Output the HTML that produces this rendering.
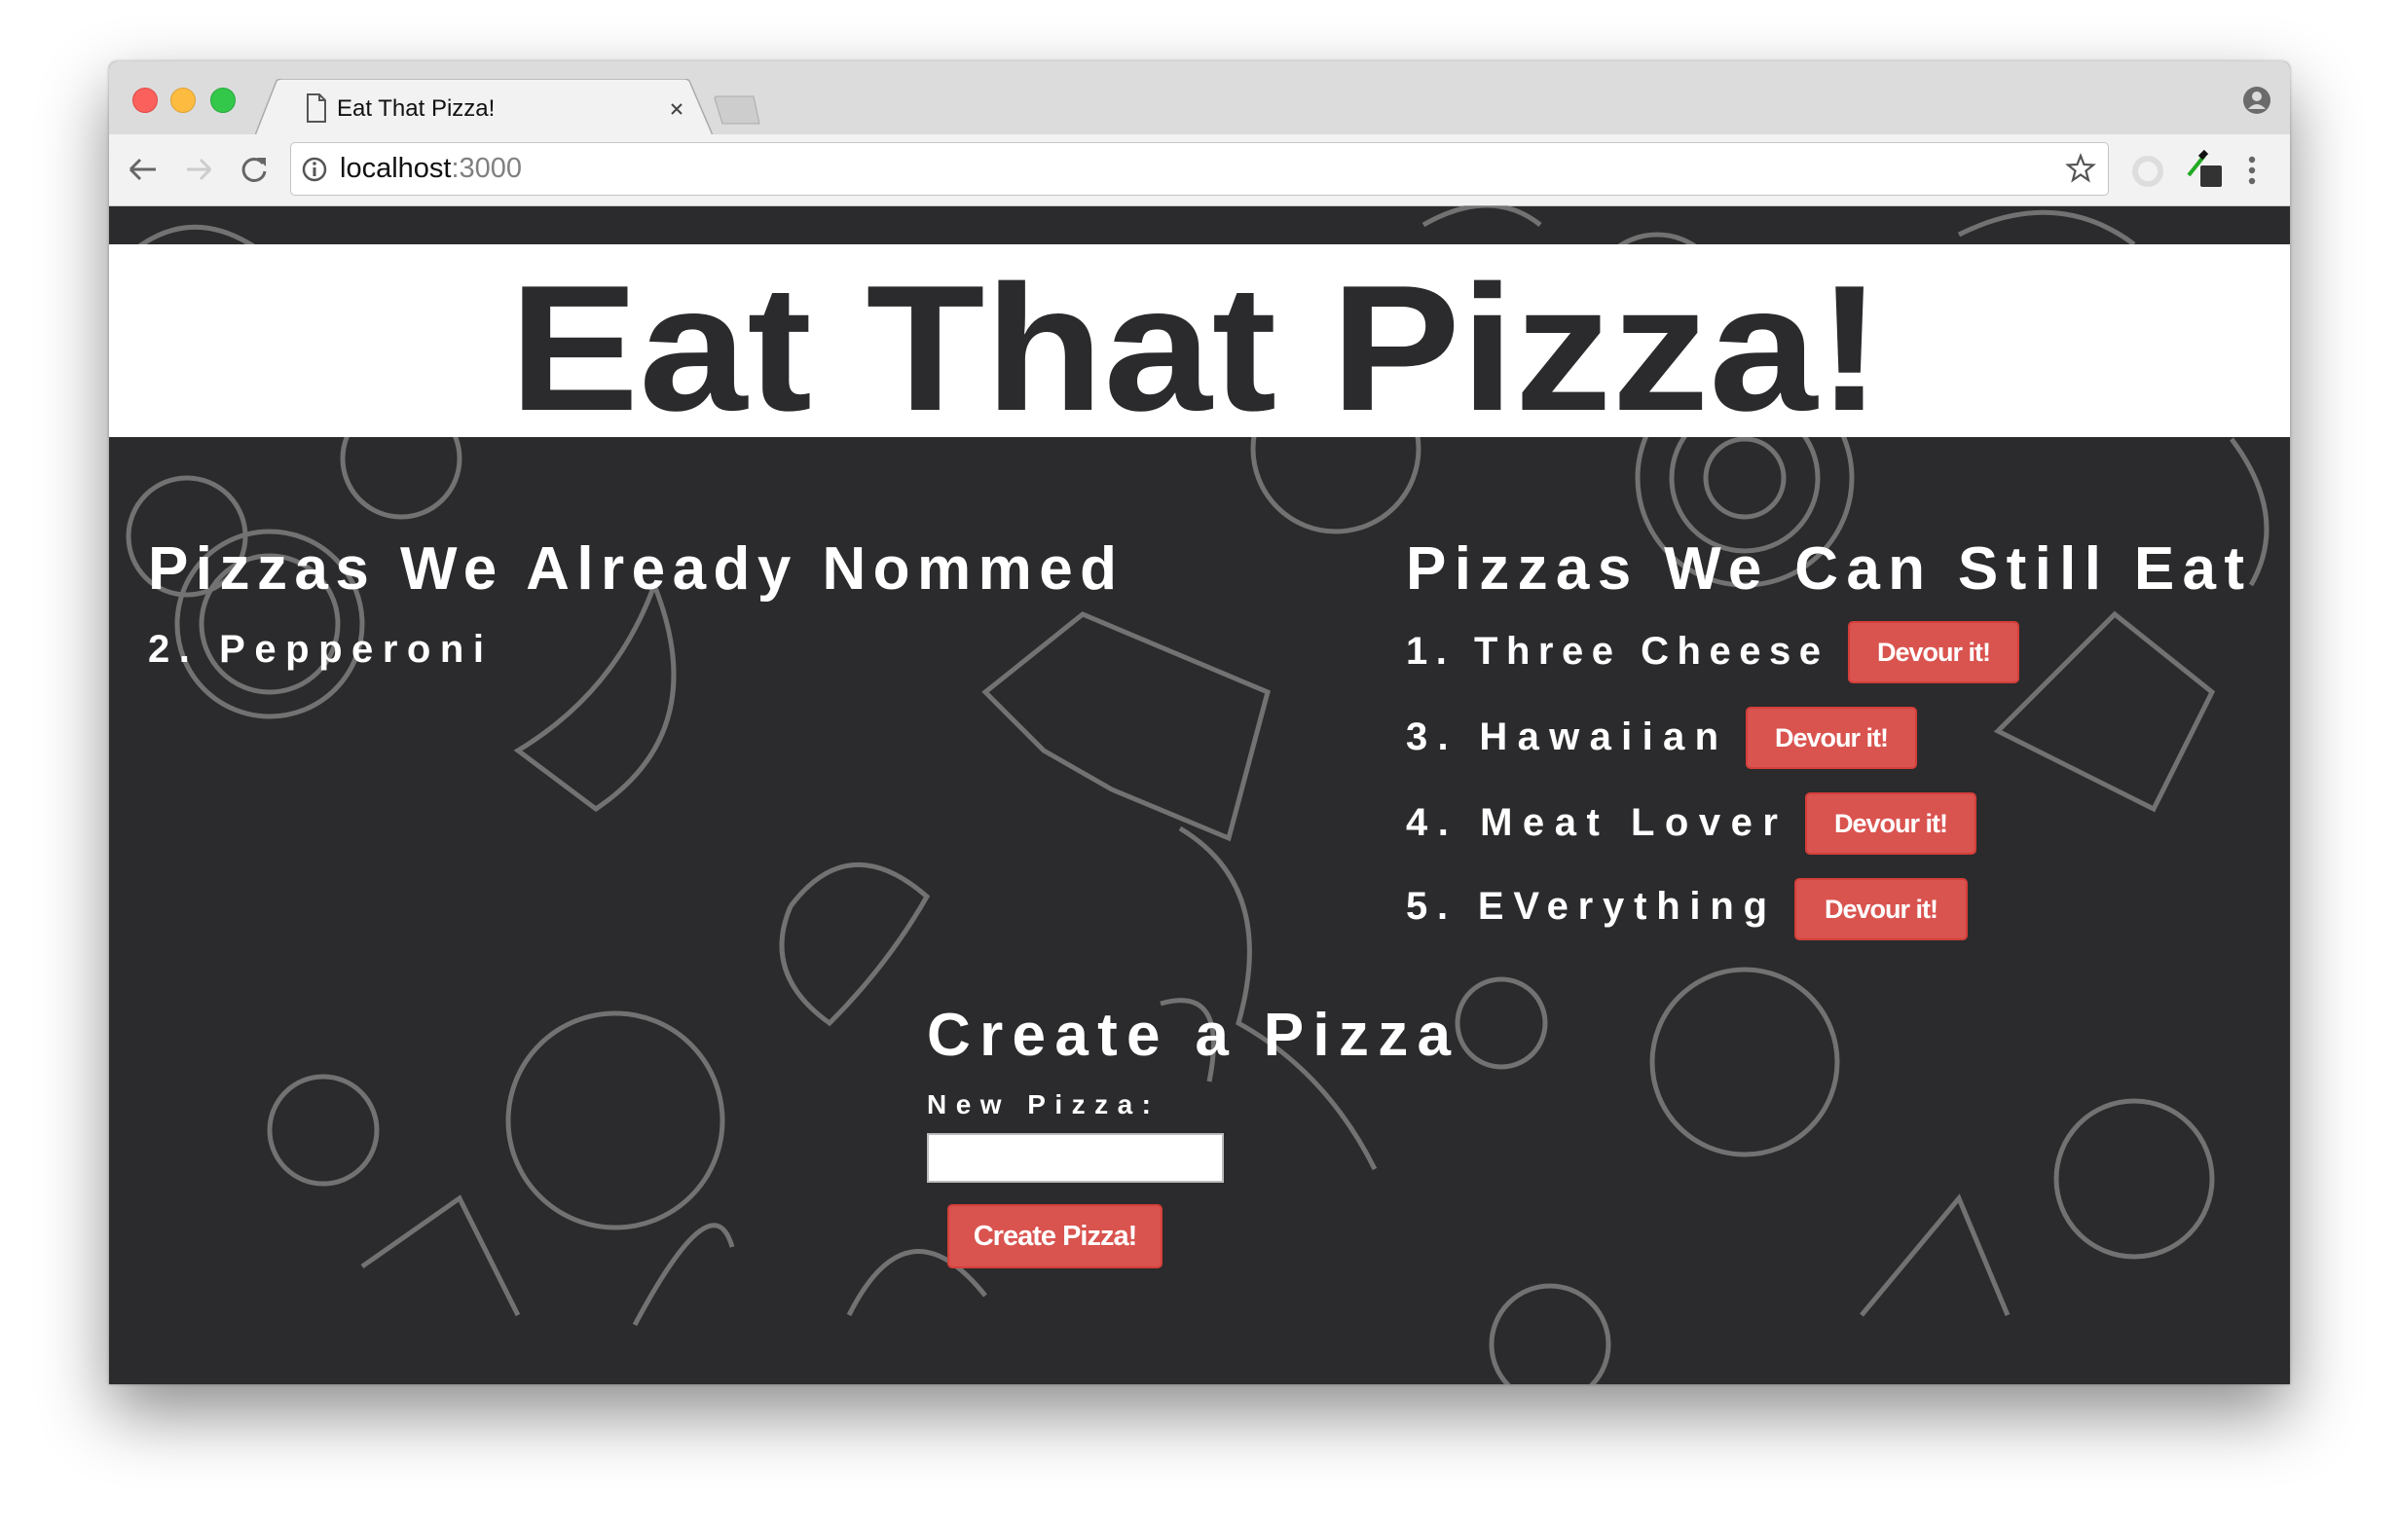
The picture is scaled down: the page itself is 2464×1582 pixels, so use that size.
<!DOCTYPE html>
<html><head><meta charset="utf-8"><style>
html,body{margin:0;padding:0;background:#fff;width:2464px;height:1582px;overflow:hidden;font-family:"Liberation Sans",sans-serif}
.win{position:absolute;left:112px;top:63px;width:2240px;height:1359px;box-shadow:0 30px 70px rgba(0,0,0,.45),0 0 3px rgba(0,0,0,.3);border-radius:8px 8px 0 0;overflow:hidden;background:#2b2a2c}
.tabbar{position:absolute;left:0;top:0;width:100%;height:75px;background:#dcdcdc;border-bottom:1px solid #b5b5b5}
.toolbar{position:absolute;left:0;top:75px;width:100%;height:73px;background:#f2f2f2;border-bottom:1px solid #c8c8c8}
.dot{position:absolute;top:27px;width:24px;height:24px;border-radius:50%}
.url{position:absolute;left:186px;top:8px;width:1866px;height:53px;background:#fff;border:1px solid #c4c4c4;border-radius:5px}
.content{position:absolute;left:0;top:148px;width:2240px;height:1211px}
.hdr{position:absolute;left:0;top:40px;width:2240px;height:198px;background:#fff}
.btn{position:absolute;background:#d9534f;border:2px solid #d43f3a;border-radius:5px;color:#fff;font-weight:bold;font-size:27px;letter-spacing:-1px;text-align:center;box-sizing:border-box}
</style></head><body>
<div class="win">
 <div class="tabbar">
  <div class="dot" style="left:24px;background:#fc605c;border:1px solid #de4a45"></div>
  <div class="dot" style="left:63px;background:#fdbc40;border:1px solid #dea236"></div>
  <div class="dot" style="left:104px;background:#34c84a;border:1px solid #27a93a"></div>
  <svg style="position:absolute;left:150px;top:18px" width="480" height="58"><path d="M0 58 L22 2 Q24 0 28 0 L440 0 Q444 0 446 2 L470 58 Z" fill="#f2f2f2" stroke="#aaa" stroke-width="1.5"/>
   <path d="M54 16 h12 l6 6 v22 h-18 z M66 16 v6 h6" fill="none" stroke="#555" stroke-width="2"/>
   <text x="84" y="38" font-size="24" font-family="Liberation Sans" fill="#111">Eat That Pizza!</text>
   <path d="M428 26 l10 10 M438 26 l-10 10" stroke="#444" stroke-width="2"/></svg>
  <svg style="position:absolute;left:620px;top:34px" width="50" height="34"><path d="M2 4 Q2 2 5 2 L42 2 L48 30 L10 30 Z" fill="#cdcdcd" stroke="#aaa"/></svg>
  <svg style="position:absolute;left:2191px;top:25px" width="30" height="30"><circle cx="15" cy="15" r="14" fill="#6b6b6b"/><circle cx="15" cy="11" r="5" fill="#dcdcdc"/><path d="M6 24 Q15 14 24 24" fill="#dcdcdc"/></svg>
 </div>
 <div class="toolbar">
  <svg style="position:absolute;left:18px;top:20px" width="150" height="34"><path d="M4 16 H30 M4 16 L14 6 M4 16 L14 26" stroke="#666" stroke-width="3" fill="none"/><path d="M62 16 H86 M86 16 L76 6 M86 16 L76 26" stroke="#ccc" stroke-width="3" fill="none"/><path d="M140 10 A11 11 0 1 0 142 18" stroke="#666" stroke-width="3" fill="none"/><path d="M134 4 L143 4 L143 13 Z" fill="#666"/></svg>
  <div class="url">
   <svg style="position:absolute;left:10px;top:13px" width="28" height="28"><circle cx="14" cy="14" r="11" fill="none" stroke="#555" stroke-width="2.5"/><rect x="12.5" y="12" width="3" height="9" fill="#555"/><circle cx="14" cy="8" r="1.8" fill="#555"/></svg>
   <div style="position:absolute;left:50px;top:10px;font-size:29px;color:#111">localhost<span style="color:#808080">:3000</span></div>
   <svg style="position:absolute;left:1822px;top:10px" width="32" height="32"><path d="M16 3 L19.5 12 L29 12.5 L21.5 18.5 L24 28 L16 22.5 L8 28 L10.5 18.5 L3 12.5 L12.5 12 Z" fill="none" stroke="#555" stroke-width="2.2"/></svg>
  </div>
  <svg style="position:absolute;left:2074px;top:18px" width="40" height="40"><circle cx="20" cy="20" r="13" fill="none" stroke="#ddd" stroke-width="6"/></svg>
  <svg style="position:absolute;left:2134px;top:16px" width="45" height="45"><rect x="14" y="16" width="22" height="22" rx="2" fill="#333"/><path d="M2 26 L18 6" stroke="#2a2" stroke-width="4"/><path d="M14 8 L20 2" stroke="#111" stroke-width="6"/></svg>
  <svg style="position:absolute;left:2195px;top:20px" width="12" height="36"><circle cx="6" cy="6" r="3.2" fill="#666"/><circle cx="6" cy="17" r="3.2" fill="#666"/><circle cx="6" cy="28" r="3.2" fill="#666"/></svg>
 </div>
 <div class="content">
  <svg style="position:absolute;left:0;top:0" width="2240" height="1211" fill="none" stroke="#8a8a8a" stroke-width="5" opacity="0.75">
   <circle cx="165" cy="430" r="95"/><circle cx="165" cy="430" r="70"/>
   <circle cx="520" cy="940" r="110"/><circle cx="1680" cy="880" r="95"/>
   <circle cx="1680" cy="280" r="110"/><circle cx="1680" cy="280" r="75"/><circle cx="1680" cy="280" r="40"/>
   <circle cx="1260" cy="250" r="85"/><circle cx="1590" cy="100" r="70"/>
   <circle cx="300" cy="260" r="60"/><circle cx="1430" cy="840" r="45"/>
   <circle cx="220" cy="950" r="55"/><circle cx="80" cy="340" r="60"/>
   <circle cx="1480" cy="1170" r="60"/><circle cx="2080" cy="1000" r="80"/>
   <path d="M900 500 L1000 420 L1190 500 L1150 650 L1030 600 L960 560 Z"/>
   <path d="M560 390 Q520 500 420 560 L500 620 Q620 540 560 390"/>
   <path d="M1100 640 Q1200 700 1160 840 Q1250 890 1300 990"/>
   <path d="M700 720 Q760 640 840 710 Q800 780 740 840 Q670 790 700 720"/>
   <path d="M1940 540 L2060 420 L2160 500 L2100 620 Z"/>
   <path d="M260 1090 L360 1020 L420 1140 M540 1150 Q620 1000 640 1070"/>
   <path d="M1800 1140 L1900 1020 L1950 1140 M760 1140 Q820 1020 900 1120"/>
   <path d="M10 60 Q80 -10 160 50 M1350 20 Q1420 -20 1470 20 M1900 30 Q2000 -20 2080 40"/>
   <path d="M2180 240 Q2240 320 2200 390 M1080 820 Q1150 800 1130 900"/>
  </svg>
  <div class="hdr"></div>
  <svg style="position:absolute;left:0;top:0" width="2240" height="1211">
   <text x="411" y="210" textLength="1410" lengthAdjust="spacingAndGlyphs" font-size="184" font-weight="bold" font-family="Liberation Sans" fill="#2b2a2c">Eat That Pizza!</text>
   <g fill="#fff" font-weight="bold" font-family="Liberation Sans">
    <text x="40" y="394" textLength="995" font-size="62">Pizzas We Already Nommed</text>
    <text x="40" y="469" textLength="345" font-size="40">2. Pepperoni</text>
    <text x="1332" y="394" textLength="861" font-size="62">Pizzas We Can Still Eat</text>
    <text x="1332" y="471" textLength="426" font-size="40">1. Three Cheese</text>
    <text x="1332" y="559" textLength="321" font-size="40">3. Hawaiian</text>
    <text x="1332" y="647" textLength="382" font-size="40">4. Meat Lover</text>
    <text x="1332" y="733" textLength="371" font-size="40">5. EVerything</text>
    <text x="840" y="873" textLength="538" font-size="62">Create a Pizza</text>
    <text x="840" y="933" textLength="230" font-size="28">New Pizza:</text>
   </g>
  </svg>
  <div class="btn" style="left:1786px;top:427px;width:176px;height:64px;line-height:60px">Devour it!</div>
  <div class="btn" style="left:1681px;top:515px;width:176px;height:64px;line-height:60px">Devour it!</div>
  <div class="btn" style="left:1742px;top:603px;width:176px;height:64px;line-height:60px">Devour it!</div>
  <div class="btn" style="left:1731px;top:691px;width:178px;height:64px;line-height:60px">Devour it!</div>
  <div style="position:absolute;left:840px;top:953px;width:305px;height:51px;background:#fff;border:2px solid #bbb;box-sizing:border-box"></div>
  <div class="btn" style="left:861px;top:1026px;width:221px;height:66px;line-height:62px;font-size:29px">Create Pizza!</div>
 </div>
</div>
</body></html>
